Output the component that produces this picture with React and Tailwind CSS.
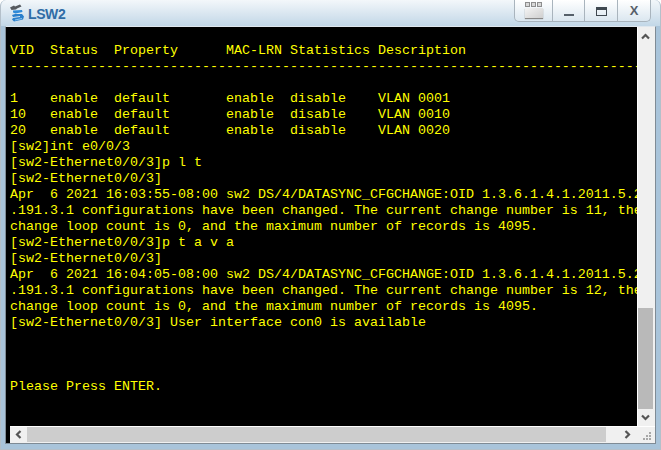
const lines = [
  "",
  "VID  Status  Property      MAC-LRN Statistics Description",
  "-------------------------------------------------------------------------------------------",
  "",
  "1    enable  default       enable  disable    VLAN 0001",
  "10   enable  default       enable  disable    VLAN 0010",
  "20   enable  default       enable  disable    VLAN 0020",
  "[sw2]int e0/0/3",
  "[sw2-Ethernet0/0/3]p l t",
  "[sw2-Ethernet0/0/3]",
  "Apr  6 2021 16:03:55-08:00 sw2 DS/4/DATASYNC_CFGCHANGE:OID 1.3.6.1.4.1.2011.5.25",
  ".191.3.1 configurations have been changed. The current change number is 11, the",
  "change loop count is 0, and the maximum number of records is 4095.",
  "[sw2-Ethernet0/0/3]p t a v a",
  "[sw2-Ethernet0/0/3]",
  "Apr  6 2021 16:04:05-08:00 sw2 DS/4/DATASYNC_CFGCHANGE:OID 1.3.6.1.4.1.2011.5.25",
  ".191.3.1 configurations have been changed. The current change number is 12, the",
  "change loop count is 0, and the maximum number of records is 4095.",
  "[sw2-Ethernet0/0/3] User interface con0 is available",
  "",
  "",
  "",
  "Please Press ENTER.",
];

function Logo() {
  return (
    <svg width="16" height="19" viewBox="0 0 16 19" className="shrink-0">
      <path d="M1 3.5 L5 1.5 L6 2.5 L11 0.5 L12.5 2.5 L8 4.5 L7 5.5 L2.5 6 Z" fill="#55595e" />
      <path d="M4 6.5 L13 6 L13.5 8 L6.5 9.5 L4 8.5 Z" fill="#2f8ad8" />
      <path d="M3 11 L6 10 L13 10 L15 12.5 L14 15.5 L5 17.5 L3 15.5 L4 14 L11 13 L11 12 L4 13 Z" fill="#2a7fcc" />
      <path d="M6 15.5 L13 14 L13 15 L6 16.5 Z" fill="#8cc4ee" />
    </svg>
  );
}

function TitleButton({ children, w }) {
  return (
    <div className={`${w} h-full flex items-center justify-center border-r border-[#a9b4bd] last:border-r-0`}>
      {children}
    </div>
  );
}

function Grip() {
  const on = [0, 0, 1, 0, 1, 1, 1, 1, 1];
  return (
    <div className="w-[17px] pl-[5px] pt-[5px]">
      <div className="grid grid-cols-[2px_2px_2px] gap-px">
        {on.map((v, i) => (
          <span key={i} className={v ? "w-[2px] h-[2px] bg-[#a8a8a8]" : "w-[2px] h-[2px]"} />
        ))}
      </div>
    </div>
  );
}

export default function App() {
  return (
    <div className="w-[661px] h-[450px] flex flex-col overflow-hidden rounded-t-[6px] bg-[#a9c4da] border-x border-b border-[#b4c0ca]">
      <div className="h-[26px] flex items-start shrink-0 bg-gradient-to-b from-[#f3f7fa] to-[#c2d7e7]">
        <div className="flex items-start gap-[3px] pl-[8px] pt-[4px]">
          <Logo />
          <span className="text-[14px] leading-[20px] font-bold tracking-[-0.4px] text-[#2f6ca6] font-['Liberation_Sans',sans-serif]">LSW2</span>
        </div>
        <div className="ml-auto mr-[9px] h-[22px] flex bg-gradient-to-b from-[#ffffff] to-[#dbe7f0] border border-t-0 border-[#a9b4bd] rounded-b-[5px]">
          <TitleButton w="w-[38px]">
            <div className="w-[18px] h-[16px] flex flex-col gap-px mt-[-2px]">
              <div className="flex gap-px h-[5px]">
                <div className="flex-1 bg-[#d8d8d8] border border-[#8d8d8d]" />
                <div className="flex-1 bg-[#d8d8d8] border border-[#8d8d8d]" />
                <div className="flex-1 bg-[#d8d8d8] border border-[#8d8d8d]" />
              </div>
              <div className="flex-1 bg-gradient-to-br from-[#f4f4f4] to-[#cfcfcf] shadow-[0_1px_1px_#888]" />
            </div>
          </TitleButton>
          <TitleButton w="w-[32px]">
            <div className="w-[10px] h-[2px] bg-[#56606a] mt-[8px]" />
          </TitleButton>
          <TitleButton w="w-[33px]">
            <div className="w-[11px] h-[9px] border border-[#3f4850] border-t-[3px] mt-px" />
          </TitleButton>
          <TitleButton w="w-[32px]">
            <span className="text-[13px] leading-none font-bold text-[#56606a] font-['Liberation_Sans',sans-serif]">X</span>
          </TitleButton>
        </div>
      </div>
      <div className="flex-1 mx-[4px] mb-[5px] bg-black border border-[#7f8b95] border-t-[#dfe7ee] flex flex-col min-h-0">
        <div className="flex-1 flex min-h-0">
          <div className="flex-1 min-w-0 bg-black overflow-hidden">
            <pre className="m-0 pl-[4px] text-[13.33px] leading-[16px] text-[#ffff00] font-['Liberation_Mono',monospace]">
              {lines.join("\n")}
            </pre>
          </div>
          <div className="w-[18px] flex flex-col shrink-0 bg-[#f0f0f0] border-l border-white">
            <div className="w-[15px] h-[18px] flex items-center justify-center">
              <svg width="9" height="7" viewBox="0 0 9 7"><path d="M1 5.5 L4.5 2 L8 5.5" fill="none" stroke="#555" strokeWidth="2.2" /></svg>
            </div>
            <div className="flex-1" />
            <div className="w-[15px] h-[101px] bg-[#b9b9b9]" />
            <div className="w-[15px] h-[17px] flex items-center justify-center">
              <svg width="9" height="7" viewBox="0 0 9 7"><path d="M1 1.5 L4.5 5 L8 1.5" fill="none" stroke="#555" strokeWidth="2.2" /></svg>
            </div>
          </div>
        </div>
        <div className="ml-[4px] h-[17px] flex shrink-0 bg-[#f0f0f0] border-t border-white">
          <div className="w-[17px] h-[15px] flex items-center justify-center">
            <svg width="7" height="9" viewBox="0 0 7 9"><path d="M5.5 1 L2 4.5 L5.5 8" fill="none" stroke="#555" strokeWidth="2.2" /></svg>
          </div>
          <div className="w-[579px] h-[15px] bg-[#cdcdcd]" />
          <div className="flex-1 h-[15px] flex items-center justify-end pr-[7px]">
            <svg width="7" height="9" viewBox="0 0 7 9"><path d="M1.5 1 L5 4.5 L1.5 8" fill="none" stroke="#555" strokeWidth="2.2" /></svg>
          </div>
          <Grip />
        </div>
      </div>
    </div>
  );
}
